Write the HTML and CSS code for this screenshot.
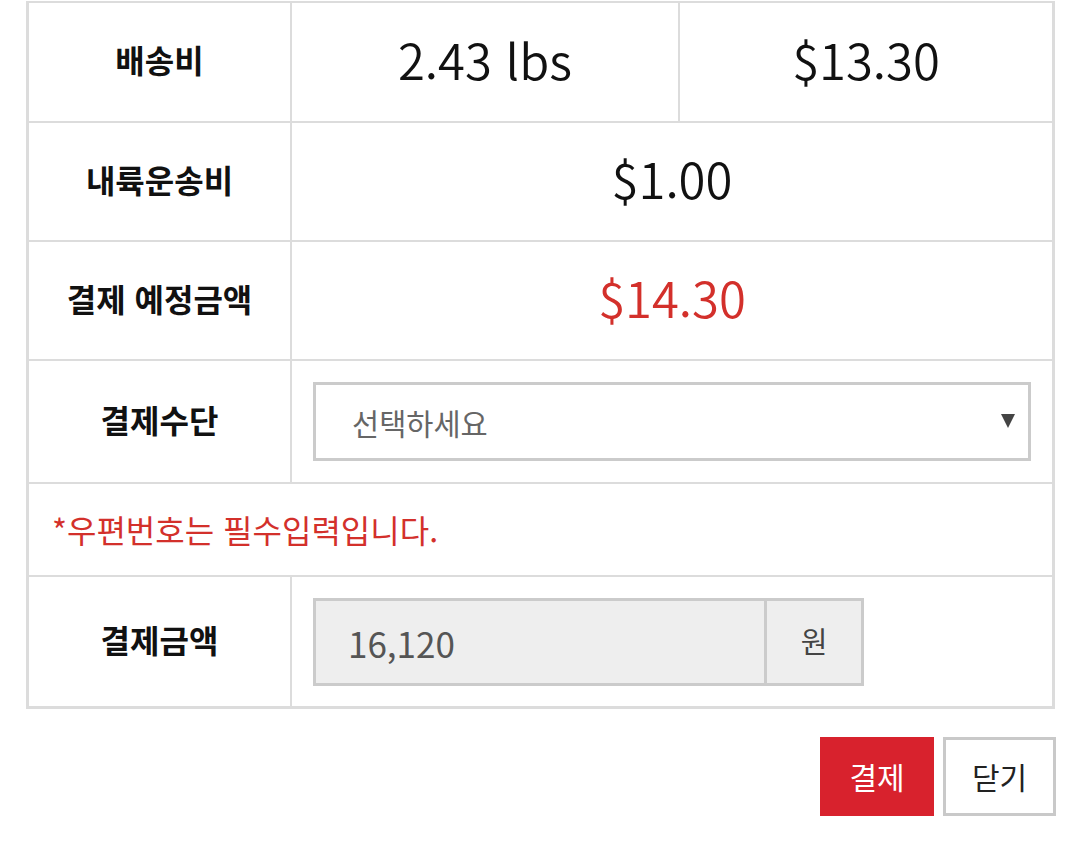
FILE: index.html
```html
<!DOCTYPE html>
<html lang="ko">
<head>
<meta charset="utf-8">
<link rel="stylesheet" href="styles.css">
</head>
<body>
<div class="page">
  <div class="sheet">
    <div class="row r1">
      <div class="label">배송비</div>
      <div class="val split">2.43 lbs</div>
      <div class="val">$13.30</div>
    </div>
    <div class="row r2">
      <div class="label">내륙운송비</div>
      <div class="val wide">$1.00</div>
    </div>
    <div class="row r3">
      <div class="label">결제 예정금액</div>
      <div class="val wide red">$14.30</div>
    </div>
    <div class="row r4">
      <div class="label">결제수단</div>
      <div class="field wide">
        <div class="select"><span>선택하세요</span><span class="arrow"></span></div>
      </div>
    </div>
    <div class="row r5">
      <div class="notice">*우편번호는 필수입력입니다.</div>
    </div>
    <div class="row r6">
      <div class="label">결제금액</div>
      <div class="field wide">
        <div class="group">
          <div class="input">16,120</div>
          <div class="addon">원</div>
        </div>
      </div>
    </div>
  </div>
  <div class="actions">
    <button class="btn primary">결제</button>
    <button class="btn">닫기</button>
  </div>
</div>
</body>
</html>
```
FILE: styles.css
```css
* { box-sizing: border-box; }
html, body { margin: 0; padding: 0; background: #fff; }
body {
  font-family: "Noto Sans CJK KR", "Noto Sans", sans-serif;
  color: #111;
}
.page {
  padding: 1px 0 0 26px;
  width: 1056px;
}
.sheet {
  width: 1029px;
  border: 3px solid #dcdcdc;
  border-top: 2px solid #dcdcdc;
}
.row {
  display: grid;
  grid-template-columns: 263px 388px 372px;
  border-top: 2px solid #dcdcdc;
}
.row.r1 { border-top: none; height: 118px; }
.row.r2 { height: 119px; }
.row.r3 { height: 119px; }
.row.r4 { height: 123px; }
.row.r5 { height: 93px; grid-template-columns: 1fr; }
.row.r6 { height: 131px; }

.label {
  border-right: 2px solid #dcdcdc;
  display: flex;
  align-items: center;
  justify-content: center;
  padding-bottom: 6px;
  font-size: 32px;
  font-weight: 700;
  color: #111;
}
.val {
  display: flex;
  align-items: center;
  justify-content: center;
  padding-bottom: 8px;
  font-size: 49px;
  font-weight: 350;
  color: #111;
}
.val.split { border-right: 2px solid #dcdcdc; }
.wide { grid-column: 2 / 4; }
.val.red { color: #d3302b; }

.field {
  padding: 21px;
  display: flex;
  align-items: stretch;
}
.select {
  flex: 1;
  height: 79px;
  border: 3px solid #cbcbcb;
  display: flex;
  align-items: center;
  justify-content: space-between;
  padding: 0 13px 0 36px;
  font-size: 29.5px;
  color: #666;
  background: #fff;
}
.select .arrow {
  width: 0;
  height: 0;
  border-left: 7px solid transparent;
  border-right: 7px solid transparent;
  border-top: 14px solid #444;
  margin-top: -2px;
}
.notice {
  display: flex;
  align-items: center;
  padding-left: 23px;
  padding-bottom: 2px;
  font-size: 32px;
  color: #d3302b;
}
.group {
  display: flex;
  width: 551px;
  height: 88px;
  border: 3px solid #cbcbcb;
  background: #eeeeee;
}
.input {
  flex: 1;
  display: flex;
  align-items: center;
  padding-left: 32px;
  font-size: 35px;
  color: #555;
  border-right: 3px solid #cbcbcb;
}
.addon {
  width: 94px;
  display: flex;
  align-items: center;
  justify-content: center;
  padding-bottom: 4px;
  font-size: 29px;
  color: #444;
}
.actions {
  display: flex;
  justify-content: flex-end;
  gap: 9px;
  margin-top: 28px;
}
.btn {
  font-family: inherit;
  height: 79px;
  width: 113px;
  border: 3px solid #c9c9c9;
  background: #fff;
  color: #222;
  font-size: 30px;
  padding: 0 0 2px;
  margin: 0;
}
.btn.primary {
  width: 114px;
  border: none;
  background: #d8222d;
  color: #fff;
}
```
